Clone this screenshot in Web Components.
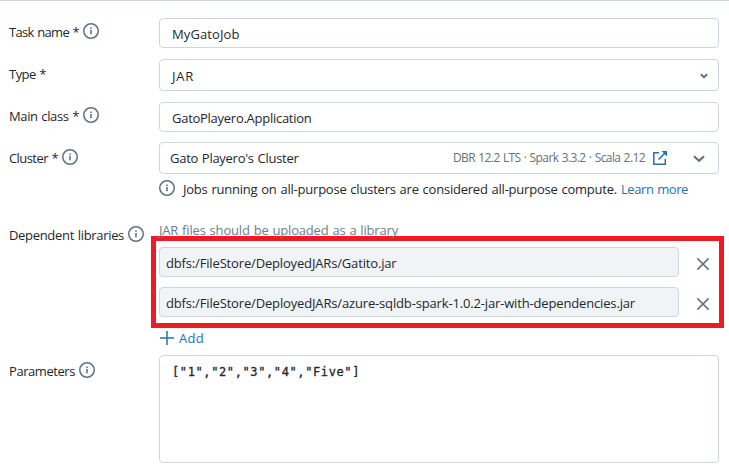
<!DOCTYPE html>
<html lang="en">
<head>
<meta charset="utf-8">
<title>Task settings</title>
<style>
  body { margin: 0; background: #fff; }
</style>
</head>
<body>
<job-form></job-form>
<script>
class BaseElement extends HTMLElement {
  constructor() {
    super();
    this.attachShadow({ mode: 'open' }).innerHTML = this.render();
  }
  render() { return ''; }
}

/* A single line of text whose tracking is adjusted to a given width. */
customElements.define('text-run', class extends BaseElement {
  render() {
    return `<style>
      :host { display: block; flex: none; white-space: pre; line-height: 18px; height: 18px; }
      span { display: inline-block; word-spacing: 0.7px; }
    </style><span><slot></slot></span>`;
  }
  connectedCallback() {
    const span = this.shadowRoot.querySelector('span');
    const target = parseFloat(this.getAttribute('w'));
    this.style.width = target + 'px';
    const count = this.textContent.length;
    span.style.letterSpacing = (target - span.getBoundingClientRect().width) / count + 'px';
  }
});

customElements.define('info-icon', class extends BaseElement {
  render() {
    return `<style>:host { display: block; flex: none; width: 16px; height: 16px; color: #5f7281; } svg { display: block; }</style>
    <svg width="16" height="16" viewBox="0 0 16 16" fill="none" stroke="currentColor">
      <circle cx="8" cy="8" r="7.25" stroke-width="1.5"/>
      <path d="M8 7v4.2" stroke-width="1.6"/><path d="M8 4.6v1.5" stroke-width="1.6"/>
    </svg>`;
  }
});

customElements.define('line-icon', class extends BaseElement {
  render() {
    const shapes = {
      close: [12, 12, '<path d="M.4.4l11.2 11.2M11.6.4L.4 11.6" stroke-width="1.5"/>'],
      plus: [14, 14, '<path d="M7 0v14M0 7h14" stroke-width="1.5"/>'],
      chevron: [8, 6, '<path d="M.8 1.2L4 4.2l3.2-3" stroke-width="2"/>'],
      chevronLarge: [12, 8, '<path d="M1 1.2l5 4.6 5-4.6" stroke-width="2.2"/>'],
      open: [14, 14, '<path d="M6 1.8H.8v11.4h11.5V8" stroke-width="1.5"/><path d="M5.5 8.5l6.8-6.8" stroke-width="1.6"/><path d="M8.5 0H14v5.5z" fill="currentColor" stroke="none"/>']
    };
    const [w, h, body] = shapes[this.getAttribute('name')];
    return `<style>:host { display: block; flex: none; width: ${w}px; height: ${h}px; } svg { display: block; overflow: visible; }</style>
    <svg width="${w}" height="${h}" viewBox="0 0 ${w} ${h}" fill="none" stroke="currentColor">${body}</svg>`;
  }
});

customElements.define('form-row', class extends BaseElement {
  render() {
    return `<style>
      :host { display: grid; grid-template-columns: 150px 560px; align-items: start; }
      .label { display: flex; align-items: flex-start; gap: 4px; padding-top: var(--label-top, 5px); }
      .control { display: flex; flex-direction: column; }
    </style>
    <div class="label"><slot name="label"></slot>${this.hasAttribute('info') ? '<info-icon></info-icon>' : ''}</div>
    <div class="control"><slot></slot></div>`;
  }
});

customElements.define('field-box', class extends BaseElement {
  render() {
    return `<style>
      :host { display: flex; align-items: flex-start; box-sizing: border-box; height: 30px; padding: 6px 12px 0; border: 1px solid #c9d7e4; border-radius: 4px; background: #fff; }
      :host([tall]) { height: 32px; padding-top: 7px; }
      :host([filled]) { background: #f0f4f7; padding: 6px 7px 0 6px; width: 520px; flex: none; }
    </style><slot></slot>`;
  }
});

customElements.define('library-row', class extends BaseElement {
  render() {
    return `<style>
      :host { display: flex; align-items: center; gap: 18px; }
      line-icon { color: #5f7281; margin-top: 4px; }
    </style><field-box filled><slot></slot></field-box><line-icon name="close"></line-icon>`;
  }
});

customElements.define('job-form', class extends BaseElement {
  render() {
    return `<style>
      :host { display: flex; flex-direction: column; box-sizing: border-box; width: 729px; height: 475px; overflow: hidden;
        border-top: 1px solid #c9d7e4; padding: 17px 0 0 9px; font: 13px "Open Sans", "Noto Sans", sans-serif; color: #1f272d; }
      .type { margin-top: 11px; } .main { margin-top: 11px; } .cluster { margin-top: 10px; }
      .spacer { flex: 1; }
      .gray { color: #6b6f73; font-size: 12px; }
      .link { color: #2272b4; }
      .note { display: flex; margin-top: 6px; }
      .note .msg { margin: 0 4px 0 8px; }
      .libs { margin-top: 23px; }
      .hint { color: #6b7e8e; }
      .frame { box-sizing: border-box; width: 573px; height: 92px; margin: -3px 0 0 -8px; padding: 6px 0 0 3px; border: 5px solid #ed1c24; display: flex; flex-direction: column; gap: 10px; }
      .add { display: flex; gap: 5px; color: #2272b4; margin-top: 1px; align-items: flex-start; }
      .add line-icon { margin: 2px 0 0 1px; }
      .params { margin-top: 8px; }
      .area { height: 108px; padding: 7px 12px 0 12px; font: 12px "DejaVu Sans Mono", monospace; -webkit-text-stroke: 0.3px #1f272d; }
    </style>
    <form-row info>
      <text-run slot="label" w="70">Task name *</text-run>
      <field-box><text-run w="67.5">MyGatoJob</text-run></field-box>
    </form-row>
    <form-row class="type" style="--label-top:6px">
      <text-run slot="label" w="37">Type *</text-run>
      <field-box tall><text-run w="22">JAR</text-run><div class="spacer"></div><line-icon name="chevron" style="margin:6px -2px 0 0;color:#5f7281"></line-icon></field-box>
    </form-row>
    <form-row info class="main">
      <text-run slot="label" w="70">Main class *</text-run>
      <field-box><text-run w="139.5">GatoPlayero.Application</text-run></field-box>
    </form-row>
    <form-row info class="cluster" style="--label-top:7px">
      <text-run slot="label" w="49">Cluster *</text-run>
      <div>
        <field-box tall style="padding:6px 13px 0 10px">
          <text-run w="128.5">Gato Playero's Cluster</text-run><div class="spacer"></div>
          <text-run class="gray" w="192">DBR 12.2 LTS · Spark 3.3.2 · Scala 2.12</text-run>
          <line-icon class="link" name="open" style="margin:2px 26px 0 8px"></line-icon>
          <line-icon name="chevronLarge" style="margin-top:6px;color:#5f7281"></line-icon>
        </field-box>
        <div class="note"><info-icon></info-icon><text-run class="msg" w="434">Jobs running on all-purpose clusters are considered all-purpose compute.</text-run><text-run class="link" w="67">Learn more</text-run></div>
      </div>
    </form-row>
    <form-row info class="libs">
      <text-run slot="label" w="115">Dependent libraries</text-run>
      <div>
        <text-run class="hint" w="239">JAR files should be uploaded as a library</text-run>
        <div class="frame">
          <library-row><text-run w="230.5">dbfs:/FileStore/DeployedJARs/Gatito.jar</text-run></library-row>
          <library-row><text-run w="469">dbfs:/FileStore/DeployedJARs/azure-sqldb-spark-1.0.2-jar-with-dependencies.jar</text-run></library-row>
        </div>
        <div class="add"><line-icon name="plus"></line-icon><text-run w="25">Add</text-run></div>
      </div>
    </form-row>
    <form-row info class="params" style="--label-top:7px">
      <text-run slot="label" w="66">Parameters</text-run>
      <field-box class="area"><text-run w="188">["1","2","3","4","Five"]</text-run></field-box>
    </form-row>`;
  }
});
</script>
</body>
</html>
